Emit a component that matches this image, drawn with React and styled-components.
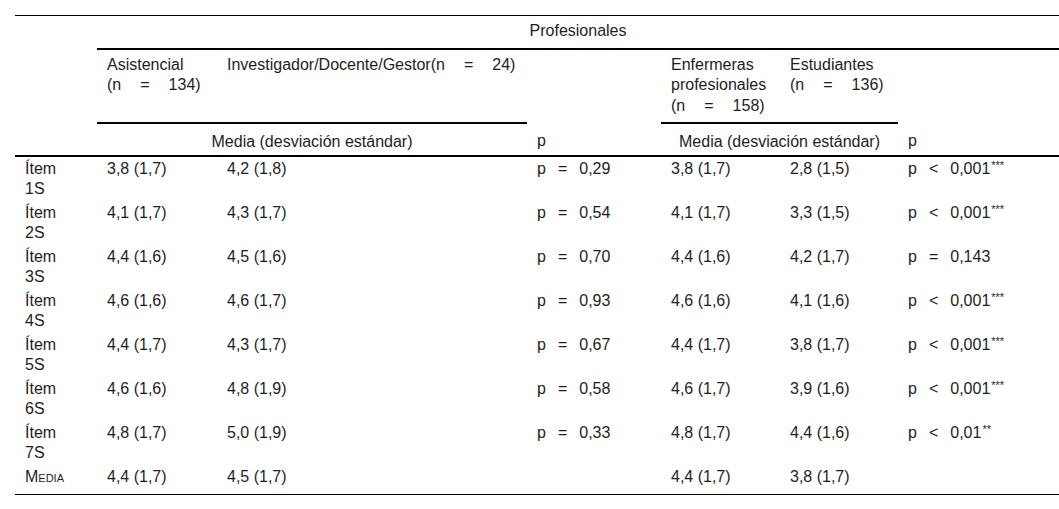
import React from "react";
import styled, { createGlobalStyle } from "styled-components";

const Global = createGlobalStyle`
  html, body { margin: 0; padding: 0; background: #fff; overflow: hidden; }
  body { font-family: "Liberation Sans", Arial, sans-serif; color: #1e1e1e; }
`;

const Page = styled.div`
  padding: 15px 0 0 15px;
`;

const Table = styled.table`
  border-collapse: collapse;
  table-layout: fixed;
  width: 1044px;
  font-size: 16px;
  line-height: 20px;
  border-top: 1px solid #000;
  border-bottom: 1px solid #000;
`;

const Col = styled.col`
  width: ${(p) => p.$w}px;
`;

const Th = styled.th`
  font-weight: normal;
  line-height: 20.5px;
  text-align: ${(p) => p.$align || "left"};
  vertical-align: top;
  padding: ${(p) => (p.$low ? "8px 10px 2px" : "5px 10px 6px")};
  border-bottom: ${(p) => (p.$rule ? "2px solid #000" : "none")};
`;

const Td = styled.td`
  text-align: left;
  vertical-align: top;
  padding: 2px 10px ${(p) => (p.$last ? 7 : 2)}px;
`;

const Label = styled.span`
  display: inline-block;
  max-width: 46px;
  font-variant: ${(p) => (p.$caps ? "small-caps" : "normal")};
`;

const Stat = styled.span`
  white-space: nowrap;
`;

const Op = styled.span`
  display: inline-block;
  margin: 0 ${(p) => p.$gap}px;
`;

const Stars = styled.sup`
  font-size: 11px;
  line-height: 0;
  vertical-align: 5px;
  margin-left: 1px;
`;

const N = ({ v }) => (
  <Stat>
    (n<Op $gap={19}>=</Op>
    {v})
  </Stat>
);

const P = ({ op, v, stars }) => (
  <Stat>
    p<Op $gap={12}>{op}</Op>
    {v}
    {stars && <Stars>{stars}</Stars>}
  </Stat>
);

const rows = [
  ["Ítem 1S", "3,8 (1,7)", "4,2 (1,8)", ["=", "0,29"], "3,8 (1,7)", "2,8 (1,5)", ["<", "0,001", "***"]],
  ["Ítem 2S", "4,1 (1,7)", "4,3 (1,7)", ["=", "0,54"], "4,1 (1,7)", "3,3 (1,5)", ["<", "0,001", "***"]],
  ["Ítem 3S", "4,4 (1,6)", "4,5 (1,6)", ["=", "0,70"], "4,4 (1,6)", "4,2 (1,7)", ["=", "0,143"]],
  ["Ítem 4S", "4,6 (1,6)", "4,6 (1,7)", ["=", "0,93"], "4,6 (1,6)", "4,1 (1,6)", ["<", "0,001", "***"]],
  ["Ítem 5S", "4,4 (1,7)", "4,3 (1,7)", ["=", "0,67"], "4,4 (1,7)", "3,8 (1,7)", ["<", "0,001", "***"]],
  ["Ítem 6S", "4,6 (1,6)", "4,8 (1,9)", ["=", "0,58"], "4,6 (1,7)", "3,9 (1,6)", ["<", "0,001", "***"]],
  ["Ítem 7S", "4,8 (1,7)", "5,0 (1,9)", ["=", "0,33"], "4,8 (1,7)", "4,4 (1,6)", ["<", "0,01", "**"]],
];

const widths = [82, 120, 310, 134, 119, 118, 161];

export default function App() {
  return (
    <>
      <Global />
      <Page>
        <Table>
          <colgroup>
            {widths.map((w, i) => (
              <Col key={i} $w={w} />
            ))}
          </colgroup>
          <thead>
            <tr>
              <Th />
              <Th colSpan={6} $align="center" $rule>
                Profesionales
              </Th>
            </tr>
            <tr>
              <Th />
              <Th $rule>
                Asistencial <N v="134" />
              </Th>
              <Th $rule>
                Investigador/Docente/Gestor
                <N v="24" />
              </Th>
              <Th />
              <Th $rule>
                Enfermeras profesionales <N v="158" />
              </Th>
              <Th $rule>
                Estudiantes <N v="136" />
              </Th>
              <Th />
            </tr>
            <tr>
              <Th $rule $low />
              <Th colSpan={2} $align="center" $rule $low>
                Media (desviación estándar)
              </Th>
              <Th $rule $low>p</Th>
              <Th colSpan={2} $align="center" $rule $low>
                Media (desviación estándar)
              </Th>
              <Th $rule $low>p</Th>
            </tr>
          </thead>
          <tbody>
            {rows.map((r) => (
              <tr key={r[0]}>
                <Td>
                  <Label>{r[0]}</Label>
                </Td>
                <Td>{r[1]}</Td>
                <Td>{r[2]}</Td>
                <Td>
                  <P op={r[3][0]} v={r[3][1]} />
                </Td>
                <Td>{r[4]}</Td>
                <Td>{r[5]}</Td>
                <Td>
                  <P op={r[6][0]} v={r[6][1]} stars={r[6][2]} />
                </Td>
              </tr>
            ))}
            <tr>
              <Td $last>
                <Label $caps>Media</Label>
              </Td>
              <Td $last>4,4 (1,7)</Td>
              <Td $last>4,5 (1,7)</Td>
              <Td $last />
              <Td $last>4,4 (1,7)</Td>
              <Td $last>3,8 (1,7)</Td>
              <Td $last />
            </tr>
          </tbody>
        </Table>
      </Page>
    </>
  );
}
